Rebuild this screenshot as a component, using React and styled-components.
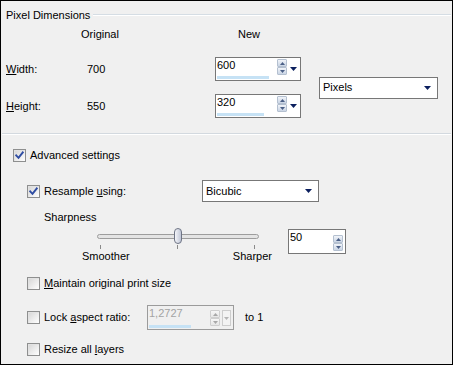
import React from 'react';
import styled, { createGlobalStyle } from 'styled-components';

const Global = createGlobalStyle`
  html, body { margin: 0; padding: 0; background: #f0f0f0; }
  body { font-family: "Liberation Sans", Arial, sans-serif; font-size: 11px; color: #000; }
`;

const Frame = styled.div`
  width: 453px;
  height: 365px;
  box-sizing: border-box;
  border: 1px solid #000;
  background: #f0f0f0;
  display: flex;
  flex-direction: column;
  overflow: hidden;
  line-height: 13px;
`;

const TopSection = styled.section`
  height: 132px;
  box-sizing: border-box;
  padding: 8px 1px 0 5px;
  display: flex;
  flex-direction: column;
`;

const Legend = styled.div`
  display: flex;
  height: 13px;
`;

const LegendLine = styled.div`
  flex: 1;
  margin: 5px 0 0 3px;
  height: 0;
  border-top: 1px solid #d5dde4;
  border-bottom: 1px solid #fff;
`;

const DimGrid = styled.div`
  margin-top: 6px;
  display: grid;
  grid-template-columns: 75px 134px 86px 137px;
  grid-template-rows: 16px 24px 24px;
  row-gap: 13px;
  align-items: center;
`;

const HeadCell = styled.div`
  align-self: start;
  grid-row: 1;
  grid-column: ${p => p.$col};
  padding-left: ${p => p.$pad || 0}px;
`;

const RowLabel = styled.div`
  grid-column: 1;
  grid-row: ${p => p.$row};
`;

const RowValue = styled.div`
  grid-column: 2;
  grid-row: ${p => p.$row};
  padding-left: 6px;
`;

const NewCell = styled.div`
  grid-column: 3;
  grid-row: ${p => p.$row};
`;

const UnitsCell = styled.div`
  grid-column: 4;
  grid-row: 2 / span 2;
  justify-self: end;
  align-self: center;
`;

const Separator = styled.div`
  margin: 0 1px;
  height: 0;
  border-top: 1px solid #d3d9df;
  border-bottom: 1px solid #fff;
`;

const Settings = styled.section`
  display: flex;
  flex-direction: column;
  padding: 14px 0 0 12px;
`;

const Row = styled.div`
  display: flex;
  align-items: center;
  height: ${p => p.$h}px;
  margin-top: ${p => p.$mt || 0}px;
  padding-left: ${p => p.$indent || 0}px;
`;

const LabelGroup = styled.label`
  display: flex;
  align-items: center;
  width: ${p => (p.$w ? `${p.$w}px` : 'auto')};
  flex: none;
`;

const LabelText = styled.span`
  white-space: pre;
`;

const Box = styled.span`
  box-sizing: border-box;
  width: 13px;
  height: 13px;
  flex: none;
  margin-right: 4px;
  border: 1px solid #8e8f8f;
  box-shadow: inset 1px 1px 0 #e2e2e2;
  background: linear-gradient(135deg, #d4d4d4 0%, #ececec 55%, #ffffff 100%);
  display: flex;
  align-items: center;
  justify-content: center;
`;

const Check = ({ checked }) => (
  <Box>
    {checked && (
      <svg width="9" height="9" viewBox="0 0 9 9">
        <path d="M1.2 4.4 L3.5 6.8 L7.8 1.4" fill="none" stroke="#2f4da3" strokeWidth="1.9" strokeLinecap="square" />
      </svg>
    )}
  </Box>
);

/* spin edit */
const SpinBox = styled.div`
  box-sizing: border-box;
  width: ${p => p.$w}px;
  height: ${p => p.$h}px;
  border: 1px solid ${p => (p.$disabled ? '#9b9b9b' : '#777777')};
  background: ${p => (p.$disabled ? '#f0f0f0' : '#ffffff')};
  display: flex;
  align-items: stretch;
  flex: none;
`;

const Field = styled.div`
  flex: 1;
  display: flex;
  flex-direction: column;
  padding: 1px 0 0 1px;
  color: ${p => (p.$disabled ? '#a3a3a3' : '#000')};
`;

const Bar = styled.div`
  margin-top: auto;
  margin-bottom: 1px;
  height: 3px;
  width: ${p => p.$w}px;
  background: #c6e2f5;
`;

const SpinCol = styled.div`
  display: flex;
  flex-direction: column;
  margin-top: ${p => p.$top}px;
  margin-right: ${p => p.$right}px;
`;

const SpinBtn = styled.div`
  box-sizing: border-box;
  width: 10px;
  height: 8px;
  border: 1px solid ${p => (p.$disabled ? '#cfcfcf' : '#b4c0d0')};
  border-radius: 1px;
  background: ${p => (p.$disabled ? 'linear-gradient(#f7f7f7, #e6e6e6)' : 'linear-gradient(#f1f4f9, #cad5e5)')};
  display: flex;
  align-items: center;
  justify-content: center;
`;

const Tri = ({ dir, color, w = 5, h = 3 }) => (
  <svg width={w} height={h} viewBox={`0 0 ${w} ${h}`}>
    {dir === 'up' ? (
      <path d={`M0 ${h} L${w / 2} 0 L${w} ${h} Z`} fill={color} />
    ) : (
      <path d={`M0 0 L${w} 0 L${w / 2} ${h} Z`} fill={color} />
    )}
  </svg>
);

const DropArrow = styled.div`
  display: flex;
  align-items: center;
  margin-right: ${p => p.$right}px;
`;

const DisabledDrop = styled.div`
  box-sizing: border-box;
  width: 9px;
  height: 16px;
  margin: 4px 2px 0 0;
  border: 1px solid #cdcdcd;
  background: #f3f3f3;
  display: flex;
  align-items: center;
  justify-content: center;
`;

const Spin = ({ value, w, h, bar, top, right, drop, disabled }) => {
  const arrowColor = disabled ? '#a8a8a8' : '#4a5f86';
  return (
    <SpinBox $w={w} $h={h} $disabled={disabled}>
      <Field $disabled={disabled}>
        <span>{value}</span>
        {bar ? <Bar $w={bar} /> : null}
      </Field>
      <SpinCol $top={top} $right={right}>
        <SpinBtn $disabled={disabled}><Tri dir="up" color={arrowColor} /></SpinBtn>
        <SpinBtn $disabled={disabled}><Tri dir="down" color={arrowColor} /></SpinBtn>
      </SpinCol>
      {drop === 'arrow' && (
        <DropArrow $right={3}><Tri dir="down" color="#0b1f5e" w={7} h={4} /></DropArrow>
      )}
      {drop === 'disabled' && (
        <DisabledDrop><Tri dir="down" color="#b5b5b5" w={5} h={3} /></DisabledDrop>
      )}
    </SpinBox>
  );
};

/* combo box */
const Combo = styled.div`
  box-sizing: border-box;
  width: ${p => p.$w}px;
  height: 22px;
  border: 1px solid #777777;
  background: #fff;
  display: flex;
  align-items: center;
  justify-content: space-between;
  padding: 0 6px 0 3px;
  flex: none;
`;

const ComboBox = ({ value, w }) => (
  <Combo $w={w}>
    <span>{value}</span>
    <Tri dir="down" color="#0b1f5e" w={7} h={4} />
  </Combo>
);

/* slider */
const SliderBlock = styled.div`
  display: flex;
  align-items: flex-start;
  margin-top: 4px;
  padding-left: 69px;
`;

const SliderCol = styled.div`
  width: 190px;
  display: flex;
  flex-direction: column;
  margin-right: 16px;
`;

const Slider = styled.div`
  position: relative;
  width: 162px;
  height: 22px;
  margin-left: 15px;
  display: flex;
  flex-direction: column;
`;

const Track = styled.div`
  box-sizing: border-box;
  margin-top: 6px;
  height: 5px;
  border: 1px solid #9d9d9d;
  border-radius: 3px;
  background: #e4e4e4;
`;

const Thumb = styled.div`
  position: absolute;
  top: 0;
  box-sizing: border-box;
  width: 8px;
  height: 16px;
  border: 1px solid #6e7485;
  border-radius: 4px;
  background: linear-gradient(to right, #f4f5f9, #c0c6d6);
`;

const Ticks = styled.div`
  display: flex;
  justify-content: space-between;
  margin-top: 6px;
  padding: 0 4px 0 3px;
  height: 5px;
`;

const Tick = styled.span`
  width: 1px;
  height: 4px;
  background: #8a8a8a;
`;

const ScaleLabels = styled.div`
  display: flex;
  height: 13px;
`;

const ScaleLabel = styled.span`
  width: ${p => (p.$w ? `${p.$w}px` : 'auto')};
`;

const SpinWrap = styled.div`
  margin-top: 1px;
`;

const ToLabel = styled.span`
  margin-left: 11px;
`;

export default function App() {
  const sharpness = 50;
  const thumbLeft = Math.round((sharpness / 100) * 154);
  return (
    <>
      <Global />
      <Frame>
        <TopSection>
          <Legend>
            <span>Pixel Dimensions</span>
            <LegendLine />
          </Legend>
          <DimGrid>
            <HeadCell $col={2}>Original</HeadCell>
            <HeadCell $col={3} $pad={23}>New</HeadCell>

            <RowLabel $row={2}><u>W</u>idth:</RowLabel>
            <RowValue $row={2}>700</RowValue>
            <NewCell $row={2}>
              <Spin value="600" w={86} h={24} bar={52} top={1} right={3} drop="arrow" />
            </NewCell>

            <RowLabel $row={3}><u>H</u>eight:</RowLabel>
            <RowValue $row={3}>550</RowValue>
            <NewCell $row={3}>
              <Spin value="320" w={86} h={24} bar={47} top={1} right={3} drop="arrow" />
            </NewCell>

            <UnitsCell>
              <ComboBox value="Pixels" w={119} />
            </UnitsCell>
          </DimGrid>
        </TopSection>
        <Separator />
        <Settings>
          <Row $h={13}>
            <LabelGroup><Check checked /><LabelText>Advanced settings</LabelText></LabelGroup>
          </Row>
          <Row $h={22} $mt={18} $indent={14}>
            <LabelGroup $w={175}><Check checked /><LabelText>Resample <u>u</u>sing:</LabelText></LabelGroup>
            <ComboBox value="Bicubic" w={117} />
          </Row>
          <Row $h={13} $mt={9} $indent={31}>Sharpness</Row>
          <SliderBlock>
            <SliderCol>
              <Slider>
                <Track />
                <Thumb style={{ left: `${thumbLeft}px` }} />
                <Ticks><Tick /><Tick /><Tick /></Ticks>
              </Slider>
              <ScaleLabels>
                <ScaleLabel $w={153}>Smoother</ScaleLabel>
                <ScaleLabel>Sharper</ScaleLabel>
              </ScaleLabels>
            </SliderCol>
            <SpinWrap>
              <Spin value="50" w={58} h={25} top={5} right={2} />
            </SpinWrap>
          </SliderBlock>
          <Row $h={13} $mt={14} $indent={14}>
            <LabelGroup><Check /><LabelText><u>M</u>aintain original print size</LabelText></LabelGroup>
          </Row>
          <Row $h={25} $mt={15} $indent={14}>
            <LabelGroup $w={120}><Check /><LabelText>Lock <u>a</u>spect ratio:</LabelText></LabelGroup>
            <Spin value="1,2727" w={87} h={25} bar={42} top={4} right={2} drop="disabled" disabled />
            <ToLabel>to 1</ToLabel>
          </Row>
          <Row $h={13} $mt={13} $indent={14}>
            <LabelGroup><Check /><LabelText>Resize all <u>l</u>ayers</LabelText></LabelGroup>
          </Row>
        </Settings>
      </Frame>
    </>
  );
}
